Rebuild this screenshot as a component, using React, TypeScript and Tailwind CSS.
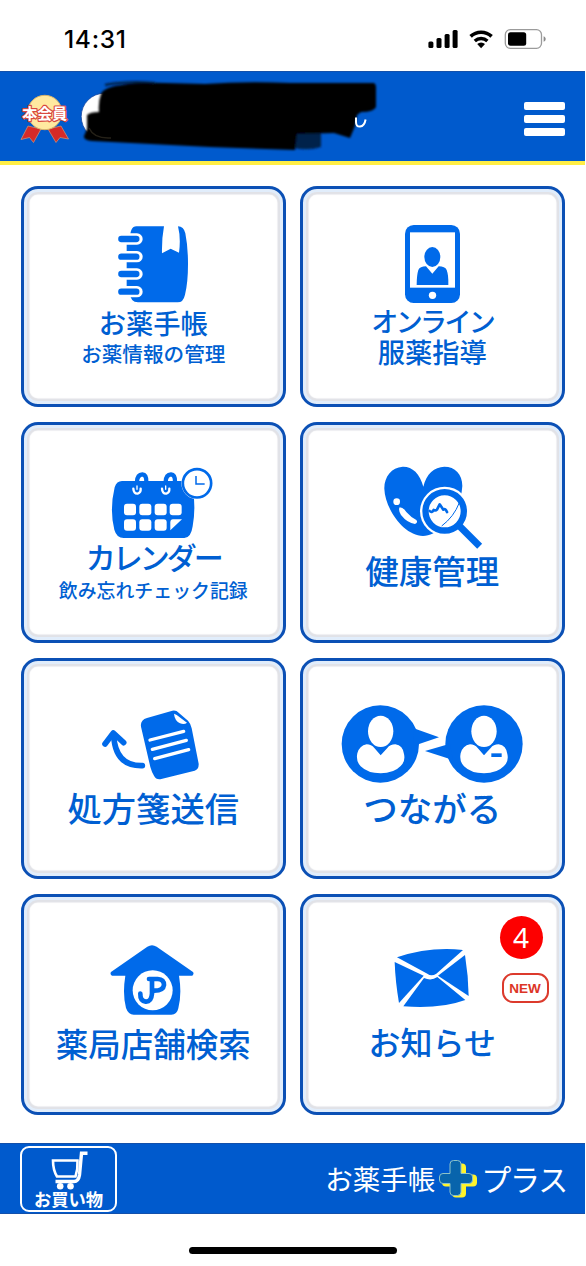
import type { ReactNode } from 'react';

const BLUE = '#006aea';

function StatusBar() {
  return (
    <div className="h-[71px] flex items-start justify-between pl-[64px] pr-[40px] bg-white">
      <span className="mt-[24px] font-['Inter',sans-serif] font-medium text-[24.5px] leading-[31px] tracking-[0.7px] text-black">
        14:31
      </span>
      <svg className="mt-[28px]" width="118" height="22" viewBox="428 28 118 22">
        <rect x="428.4" y="41.5" width="5" height="6.5" rx="1.5" />
        <rect x="436.5" y="38" width="5" height="10" rx="1.5" />
        <rect x="444.6" y="34" width="5" height="14" rx="1.5" />
        <rect x="452.6" y="30" width="5" height="18" rx="1.5" />
        <path d="M470.6 36.4a15.2 15.2 0 0 1 21 0" fill="none" stroke="#000" strokeWidth="3.6" />
        <path d="M474.8 41a9.3 9.3 0 0 1 12.6 0" fill="none" stroke="#000" strokeWidth="3.4" />
        <path d="M477.2 44.1a5.6 5.6 0 0 1 7.8 0L481.1 48.2z" />
        <rect x="505.3" y="29.7" width="36.2" height="18.6" rx="5" fill="#fff" stroke="#9b9b9b" strokeWidth="1.3" />
        <rect x="508" y="32.3" width="18.2" height="13.4" rx="2.5" />
        <path d="M543.6 36.2c2.8 1 2.8 4.6 0 5.6z" fill="#8a8a8a" />
      </svg>
    </div>
  );
}

function MemberBadge() {
  return (
    <svg width="54" height="52" viewBox="18 93 54 52" className="shrink-0">
      <g fill="#d62a27" stroke="#c98d75" strokeWidth="0.8">
        <path d="M28 126 L21 139.5 L29.5 137.5 L33.5 142.5 L41 129z" />
        <path d="M61 126 L68.5 139 L60 137.5 L56 142.5 L48 129z" />
      </g>
      <circle cx="44.8" cy="112.5" r="17.2" fill="#ffe9a0" stroke="#d8b36a" strokeWidth="1" />
      <text
        x="44.8"
        y="118.6"
        textAnchor="middle"
        fontSize="15"
        fontWeight="700"
        fontFamily="'Noto Sans CJK JP', sans-serif"
        fill="#fff"
        stroke="#d9493f"
        strokeWidth="2.4"
        strokeLinejoin="round"
        paintOrder="stroke"
      >
        本会員
      </text>
    </svg>
  );
}

function MaskedName() {
  return (
    <svg width="304" height="76" viewBox="76 77 304 76" className="shrink-0 ml-[4px]">
      <defs>
        <filter id="soft" x="-5%" y="-10%" width="110%" height="120%">
          <feGaussianBlur stdDeviation="1" />
        </filter>
      </defs>
      <circle cx="104.5" cy="115.5" r="23.3" fill="#fff" stroke="#1646a0" strokeWidth="0.8" />
      <g filter="url(#soft)">
        <path d="M296 130H321V146Q309 150 294 147z" fill="#03214c" />
        <path d="M101 93 Q104 86 122 84 Q138 81 165 82 L205 83 Q245 80 290 82 L374 82 Q376 83 376 86 V106 Q374 111 361 111 L357 114 L355 125 L350 137 L334 132 L297 133 L295 149 L210 146 L92 140 Q83 139 84 135 L87 128 L87 114 Q90 111 99 111 Q98 101 101 93z" />
        <path d="M105 84Q125 80 155 82" fill="none" stroke="#02152f" strokeWidth="2" />
      </g>
      <path d="M89 127Q94 138 111 137" fill="none" stroke="#252118" strokeWidth="1.5" />
      <path d="M356 116.5V121Q356 125.8 360 125.6Q364.5 125 365.6 118.5" fill="none" stroke="#fff" strokeWidth="2" />
    </svg>
  );
}

function Header() {
  return (
    <header className="w-[585px] h-[94px] bg-[#005acd] border-t border-t-[#1250ab] border-b-4 border-b-[#ffee45] flex items-center pl-[18px] pr-[20px]">
      <div className="flex items-center h-full pt-[4px]">
        <MemberBadge />
        <div className="pb-[5px]">
          <MaskedName />
        </div>
      </div>
      <div className="ml-auto mt-[5px] flex flex-col gap-[5.5px]">
        <span className="block w-[41px] h-[7.5px] rounded-[2px] bg-white" />
        <span className="block w-[41px] h-[7.5px] rounded-[2px] bg-white" />
        <span className="block w-[41px] h-[7.5px] rounded-[2px] bg-white" />
      </div>
    </header>
  );
}

function NotebookIcon() {
  return (
    <svg width="72" height="77" viewBox="322 148 216 231" fill={BLUE}>
      <path d="M380 149H463Q456 187 457 230L483 216L508 228Q514 185 505 149Q522 149 527 170Q535 210 535 262Q535 318 526 354Q521 377 504 377H385Q362 377 361 350H351V187H361Q361 149 380 149z" />
      {[187, 240, 292, 345].map((y) => (
        <g key={y} fill="none" strokeLinecap="round">
          <path d={`M320 ${y}H382`} stroke="#fff" strokeWidth="34" />
          <path d={`M335 ${y}H380`} stroke={BLUE} strokeWidth="19" />
        </g>
      ))}
    </svg>
  );
}

function PhoneIcon() {
  return (
    <svg width="55" height="78" viewBox="330 149 165 234" fill={BLUE}>
      <rect x="330" y="149" width="165" height="234" rx="26" />
      <rect x="345" y="171" width="135" height="166" fill="#fff" />
      <circle cx="412.5" cy="360" r="11" fill="#fff" />
      <ellipse cx="412" cy="245" rx="24" ry="30" />
      <path d="M365 329Q365 300 370 284Q375 273 393 273L412 295L431 273Q450 273 455 284Q461 300 460 329z" />
    </svg>
  );
}

function CalendarIcon() {
  return (
    <svg width="120" height="72" viewBox="250 157 360 216" fill={BLUE}>
      <path d="M337 199H520Q547 199 551 235Q558 285 549 335Q544 370 524 370H342Q321 370 314 345Q299 285 315 218Q321 199 337 199z" />
      {[0, 86].map((dx) => (
        <g key={dx} transform={`translate(${dx} 0)`} fill="none" strokeLinecap="round">
          <path d="M382 201Q383 180 398 179Q411 180 410 203" stroke={BLUE} strokeWidth="13" />
          <path d="M371 222Q372 238 384 237Q394 234 393 222" stroke="#fff" strokeWidth="7" />
          <path d="M382 214V224" stroke="#fff" strokeWidth="4" />
        </g>
      ))}
      <g fill="#fff">
        {[343, 389, 435, 480].map((x) => (
          <rect key={x} x={x} y="267" width="36" height="35" rx="9" />
        ))}
        {[343, 389, 435].map((x) => (
          <rect key={x} x={x} y="314" width="36" height="34" rx="9" />
        ))}
        <path d="M490 314H517L482 347V323Q482 314 490 314z" />
      </g>
      <circle cx="562" cy="206" r="47" fill="#fff" />
      <circle cx="562" cy="206" r="42.500" fill="#fff" stroke={BLUE} strokeWidth="8" />
      <path d="M559 184V208H585" fill="none" stroke={BLUE} strokeWidth="4.500" />
    </svg>
  );
}

function HealthIcon() {
  return (
    <svg width="102" height="84" viewBox="259 154 306 252" fill={BLUE}>
      <path d="M386 216C376 176 352 155 324 156C290 158 268 188 269 222C271 282 327 363 385 364C446 361 500 280 503 214C503 178 481 156 449 156C419 157 395 177 386 216z" />
      <circle cx="306" cy="261" r="10" fill="#fff" />
      <path d="M315 278Q326 278 335 292Q349 308 365 316Q371 324 361 328Q338 325 319 301Q310 285 315 278z" fill="#fff" />
      <circle cx="450" cy="290" r="74" fill="#fff" />
      <path d="M493 333L556 396" stroke="#fff" strokeWidth="27" />
      <path d="M495 335L555 395" stroke={BLUE} strokeWidth="21" />
      <circle cx="450" cy="290" r="57.500" fill="#fff" stroke={BLUE} strokeWidth="19" />
      <path d="M405 289Q411 296 417 286Q423 289 427 285L435 269L446 285Q452 280 457 292" fill="none" stroke={BLUE} strokeWidth="8" strokeLinejoin="round" strokeLinecap="round" />
      <path d="M494 264Q478 306 441 334" fill="none" stroke={BLUE} strokeWidth="3" />
    </svg>
  );
}

function SendIcon() {
  return (
    <svg width="104" height="70" viewBox="274 179 312 210" fill={BLUE}>
      <path d="M412 203L488 181Q500 179 507 187L535 211Q542 218 546 234L567 340Q568 356 555 361L455 386Q439 389 433 376Q427 368 422 350L394 229Q391 209 412 203z" />
      <path d="M493 190Q500 192 512 202Q524 211 532 217Q524 224 511 219Q495 211 493 190z" fill="#fff" />
      <g stroke="#fff" strokeWidth="10" strokeLinecap="round">
        <path d="M421 269L522 243" />
        <path d="M428 297L530 270" />
        <path d="M435 325L537 298" />
      </g>
      <g fill="none" stroke={BLUE} strokeWidth="17" strokeLinecap="round" strokeLinejoin="round">
        <path d="M286 281L311 248L342 277" />
        <path d="M312 255Q317 348 398 346" />
      </g>
    </svg>
  );
}

function ConnectIcon() {
  return (
    <svg width="182" height="78" viewBox="139 165 546 234" fill={BLUE}>
      <circle cx="257" cy="282" r="116" />
      <path d="M355 234L433 262L358 287z" />
      <circle cx="568" cy="282" r="116" />
      <path d="M466 281L391 303L475 330z" />
      {[0, 310].map((dx) => (
        <g key={dx} transform={`translate(${dx} 0)`} fill="#fff">
          <path d="M216 283Q230 283 239 294L258 316L278 294Q286 283 302 283Q325 287 328 312Q333 334 318 348Q297 370 258 370Q219 370 198 349Q183 333 188 310Q194 287 216 283z" />
          <ellipse cx="258" cy="244" rx="38" ry="47" />
        </g>
      ))}
      <rect x="590" y="310" width="31" height="11" />
    </svg>
  );
}

function StoreIcon() {
  return (
    <svg width="86" height="70" viewBox="301 173 258 210" fill={BLUE}>
      <path d="M304 254L413 178Q427 169 441 178L550 254Q554 260 548 265H508Q517 320 506 363Q502 382 485 382H372Q356 382 349 362Q338 320 347 265H307Q300 261 304 254z" />
      <circle cx="429" cy="309" r="60" fill="#fff" />
      <g fill="none" stroke={BLUE} strokeWidth="14" strokeLinecap="round" strokeLinejoin="round">
        <path d="M418 275H444Q463 276 463 293Q461 310 434 310" />
        <path d="M427 277V319Q425 344 408 343Q391 341 392 319" />
      </g>
    </svg>
  );
}

function MailIcon() {
  return (
    <svg width="76" height="60" viewBox="298 181 228 180" fill={BLUE}>
      <path d="M307 209Q405 176 505 187L425 258Q410 268 398 258z" />
      <path d="M300 223L387 264L313 346Q302 282 300 223z" />
      <path d="M430 264L511 202Q521 264 522 325z" />
      <path d="M388 271Q410 281 428 268L512 337Q435 365 326 356z" />
    </svg>
  );
}

type CardProps = {
  icon: ReactNode;
  iconTop: string;
  children: ReactNode;
};

function MenuCard({ icon, iconTop, children }: CardProps) {
  return (
    <button
      type="button"
      className="relative h-[220.5px] flex flex-col items-center rounded-[17px] border-[3px] border-[#0b50b5] bg-white shadow-[inset_0_0_0_3px_#e1edfb,inset_0_0_1px_5.5px_#e1e2e7] text-[#005fd2] whitespace-nowrap"
    >
      <div className={iconTop}>{icon}</div>
      {children}
    </button>
  );
}

function Menu() {
  return (
    <main className="grid grid-cols-[264.500px_264.500px] gap-x-[14.5px] gap-y-[15.6px] pl-[21px] pt-[21px] font-medium">
      <MenuCard icon={<NotebookIcon />} iconTop="mt-[37px]">
        <span className="mt-[2px] text-[27.3px] leading-[34px]">お薬手帳</span>
        <span className="mt-[1px] text-[20.6px] leading-[26px]">お薬情報の管理</span>
      </MenuCard>
      <MenuCard icon={<PhoneIcon />} iconTop="mt-[36px]">
        <span className="mt-[2px] text-[27px] leading-[32px] tracking-[-2.6px]">オンライン</span>
        <span className="mt-[-1px] text-[27.3px] leading-[30px]">服薬指導</span>
      </MenuCard>
      <MenuCard icon={<CalendarIcon />} iconTop="mt-[42px]">
        <span className="mt-[-1px] text-[30px] leading-[36px] tracking-[-3px]">カレンダー</span>
        <span className="mt-[3px] text-[18.9px] leading-[26px]">飲み忘れチェック記録</span>
      </MenuCard>
      <MenuCard icon={<HealthIcon />} iconTop="mt-[41px]">
        <span className="mt-[-1px] text-[33.5px] leading-[42px]">健康管理</span>
      </MenuCard>
      <MenuCard icon={<SendIcon />} iconTop="mt-[49px]">
        <span className="mt-[6px] text-[34.3px] leading-[42px]">処方箋送信</span>
      </MenuCard>
      <MenuCard icon={<ConnectIcon />} iconTop="mt-[44px]">
        <span className="mt-[3px] text-[34.5px] leading-[42px]">つながる</span>
      </MenuCard>
      <MenuCard icon={<StoreIcon />} iconTop="mt-[48px]">
        <span className="mt-[7px] text-[32.5px] leading-[42px]">薬局店舗検索</span>
      </MenuCard>
      <MenuCard icon={<MailIcon />} iconTop="mt-[51px]">
        <span className="mt-[12px] text-[32px] leading-[42px]">お知らせ</span>
        <span className="absolute top-[19px] right-[19px] size-[43px] rounded-full bg-[#fd0000] text-white text-[28px] leading-[43px] text-center font-['Noto_Sans',sans-serif] font-normal">
          4
        </span>
        <span className="absolute top-[76px] right-[13px] w-[47px] h-[30px] rounded-[11px] border-2 border-[#dc3a2c] bg-white text-[#dc3526] text-[13.5px] leading-[27px] text-center font-['Liberation_Sans',sans-serif] font-bold">
          NEW
        </span>
      </MenuCard>
    </main>
  );
}

function Footer() {
  return (
    <footer className="w-[585px] h-[71px] bg-[#005acd] border-y border-[#1250ab] flex items-center justify-between pl-[20px] pr-[18px] text-white">
      <button type="button" className="w-[97px] h-[66px] rounded-[9px] border-2 border-white flex flex-col items-center">
        <svg className="mt-[3px]" width="40" height="41" viewBox="52 1151 40 41" fill="none" stroke="#fff" strokeWidth="2.600">
          <path d="M90.500 1153.300H84.500L82.500 1175Q81.500 1181.500 77 1181.500H58.500" strokeWidth="3.400" />
          <path d="M56 1160.500H80.500Q81 1169 78.500 1176.500H60Q56 1170 56 1160.500z" />
          <circle cx="63.200" cy="1186.300" r="3.300" fill="#fff" stroke="none" />
          <circle cx="73.500" cy="1186.300" r="3.300" fill="#fff" stroke="none" />
        </svg>
        <span className="mt-[-3px] text-[17.3px] leading-[20px] font-bold whitespace-nowrap">お買い物</span>
      </button>
      <div className="flex items-center whitespace-nowrap leading-[36px] font-normal">
        <span className="text-[27.5px] mt-[-2px]">お薬手帳</span>
        <svg className="mx-[3px]" width="40" height="40" viewBox="439 1159 40 40">
          <path
            d="M455 1164h6q4 0 4 4v7h7q4 0 4 4v4q0 4-4 4h-7v7q0 4-4 4h-6q-4 0-4-4v-7h-6q-4 0-4-4v-4q0-4 4-4h6v-7q0-4 4-4z"
            fill="#fff32b"
            transform="translate(2 -.5)"
          />
          <path
            d="M454.500 1160.500h4q3.500 0 3.500 3.500v9.500h8q3.500 0 3.500 3.500v3q0 3.500-3.500 3.500h-8v8.500q0 3.500-3.500 3.500h-4q-3.500 0-3.500-3.500v-8.500h-7q-3.500 0-3.500-3.500v-3q0-3.500 3.500-3.500h7v-9.500q0-3.500 3.500-3.500z"
            fill="#0864ac"
            stroke="#8dc3c7"
            strokeWidth="1"
          />
        </svg>
        <span className="text-[30px] mt-[-2px] tracking-[-1.2px]">プラス</span>
      </div>
    </footer>
  );
}

export default function App() {
  return (
    <div className="w-[586px] h-[1266px] overflow-hidden bg-white flex flex-col font-['Noto_Sans_CJK_JP',sans-serif]">
      <StatusBar />
      <Header />
      <Menu />
      <div className="mt-auto">
        <Footer />
        <div className="h-[52px] flex justify-center pt-[33px]">
          <span className="block w-[208px] h-[7px] rounded-full bg-black" />
        </div>
      </div>
    </div>
  );
}
